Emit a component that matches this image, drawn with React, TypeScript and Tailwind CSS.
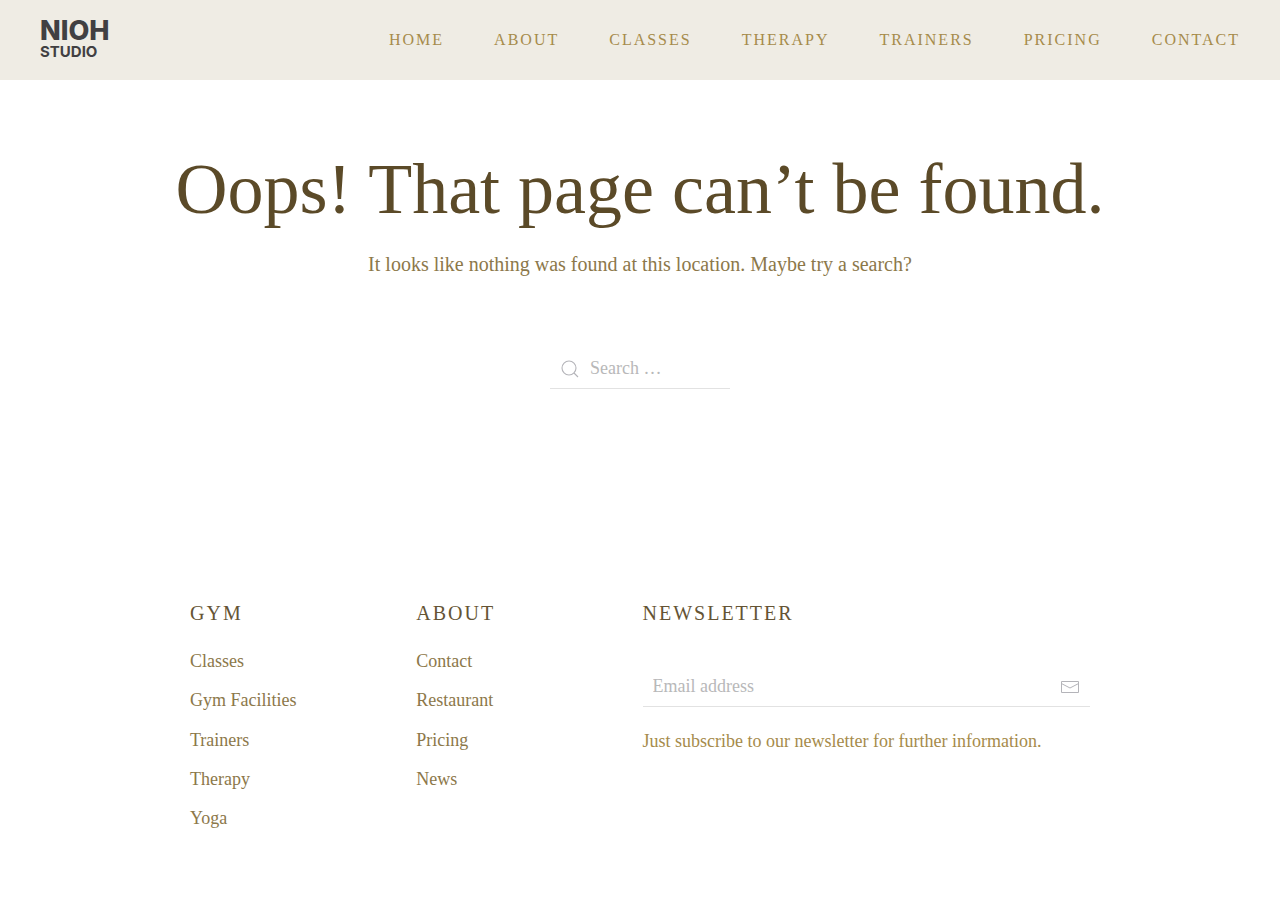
import React, { useState } from 'react';

interface ILink {
  label: string;
  href: string;
}

interface IFooterColumn {
  title: string;
  links: ILink[];
}

const navLinks: ILink[] = [
  { label: 'Home', href: '#home' },
  { label: 'About', href: '#about' },
  { label: 'Classes', href: '#classes' },
  { label: 'Therapy', href: '#therapy' },
  { label: 'Trainers', href: '#trainers' },
  { label: 'Pricing', href: '#pricing' },
  { label: 'Contact', href: '#contact' },
];

const footerColumns: IFooterColumn[] = [
  {
    title: 'Gym',
    links: [
      { label: 'Classes', href: '#classes' },
      { label: 'Gym Facilities', href: '#facilities' },
      { label: 'Trainers', href: '#trainers' },
      { label: 'Therapy', href: '#therapy' },
      { label: 'Yoga', href: '#yoga' },
    ],
  },
  {
    title: 'About',
    links: [
      { label: 'Contact', href: '#contact' },
      { label: 'Restaurant', href: '#restaurant' },
      { label: 'Pricing', href: '#pricing' },
      { label: 'News', href: '#news' },
    ],
  },
];

const SearchIcon: React.FC = () => (
  <svg width="20" height="20" viewBox="0 0 20 20" fill="none" stroke="currentColor" aria-hidden="true">
    <circle cx="9" cy="9" r="7" strokeWidth="1.1" />
    <path d="M14,14 L18,18 L14,14 Z" strokeWidth="1.1" />
  </svg>
);

const MailIcon: React.FC = () => (
  <svg width="20" height="20" viewBox="0 0 20 20" fill="none" stroke="currentColor" aria-hidden="true">
    <polyline points="1.4,6.5 10,11 18.6,6.5" />
    <path d="M1.5,4.5 H18.5 V15.5 H1.5 Z" />
  </svg>
);

const Header: React.FC = () => (
  <header className="flex min-h-20 items-center justify-between bg-[#efece4] px-10">
    <a href="#home" className="flex flex-col font-['Inter',sans-serif] text-[#414042]">
      <span className="text-[27px] leading-6 font-extrabold">NIOH</span>
      <span className="text-[15px] leading-[18px] font-bold">STUDIO</span>
    </a>
    <nav>
      <ul className="flex flex-wrap gap-x-[50px]">
        {navLinks.map((link) => (
          <li key={link.label}>
            <a href={link.href} className="text-base tracking-[2px] text-[#a68b4b] uppercase hover:text-[#5b4a28]">
              {link.label}
            </a>
          </li>
        ))}
      </ul>
    </nav>
  </header>
);

const NotFound: React.FC = () => {
  const [query, setQuery] = useState('');

  return (
    <main className="flex flex-col items-center px-10 pt-[70px] text-center">
      <h1 className="text-[72px] leading-[79px] text-[#5b4a28]">Oops! That page can’t be found.</h1>
      <p className="mt-5 text-xl leading-[30px] text-[#8c784a]">
        It looks like nothing was found at this location. Maybe try a search?
      </p>
      <form role="search" className="relative mt-[70px] w-[180px]" onSubmit={(e) => e.preventDefault()}>
        <span className="pointer-events-none absolute inset-y-0 left-0 flex w-10 items-center justify-center text-[#b4b4b9]">
          <SearchIcon />
        </span>
        <input
          type="search"
          aria-label="Search"
          placeholder="Search …"
          value={query}
          onChange={(e) => setQuery(e.target.value)}
          className="h-10 w-full border-b border-[#e2e2e2] pr-2 pl-10 text-lg text-[#5b4a28] outline-none placeholder:text-[#b8b8b9]"
        />
      </form>
    </main>
  );
};

const Footer: React.FC = () => {
  const [email, setEmail] = useState('');

  return (
    <footer className="mx-auto mt-[210px] grid w-full max-w-[900px] grid-cols-4 gap-[5px] pb-16">
      {footerColumns.map((column) => (
        <div key={column.title}>
          <h2 className="text-xl leading-7 tracking-[2px] text-[#655434] uppercase">{column.title}</h2>
          <ul className="mt-5 flex flex-col gap-[10px]">
            {column.links.map((link) => (
              <li key={link.label} className="text-lg leading-relaxed">
                <a href={link.href} className="text-[#8c784a] hover:text-[#5b4a28]">
                  {link.label}
                </a>
              </li>
            ))}
          </ul>
        </div>
      ))}

      {/* Newsletter */}
      <div className="col-span-2">
        <h2 className="text-xl leading-7 tracking-[2px] text-[#655434] uppercase">Newsletter</h2>
        <form className="relative mt-10" onSubmit={(e) => e.preventDefault()}>
          <input
            type="email"
            aria-label="Email address"
            placeholder="Email address"
            value={email}
            onChange={(e) => setEmail(e.target.value)}
            className="h-10 w-full border-b border-[#e2e2e2] pr-10 pl-[10px] text-lg text-[#5b4a28] outline-none placeholder:text-[#b8b8b9]"
          />
          <button
            type="submit"
            aria-label="Subscribe"
            className="absolute inset-y-0 right-0 flex w-10 items-center justify-center text-[#b4b4b9]"
          >
            <MailIcon />
          </button>
        </form>
        <p className="mt-5 text-lg leading-relaxed text-[#a68b4b]">
          Just subscribe to our newsletter for further information.
        </p>
      </div>
    </footer>
  );
};

const App: React.FC = () => {
  return (
    <div className="min-h-screen bg-white font-['Liberation_Serif',serif]">
      <Header />
      <NotFound />
      <Footer />
    </div>
  );
};

export default App;
